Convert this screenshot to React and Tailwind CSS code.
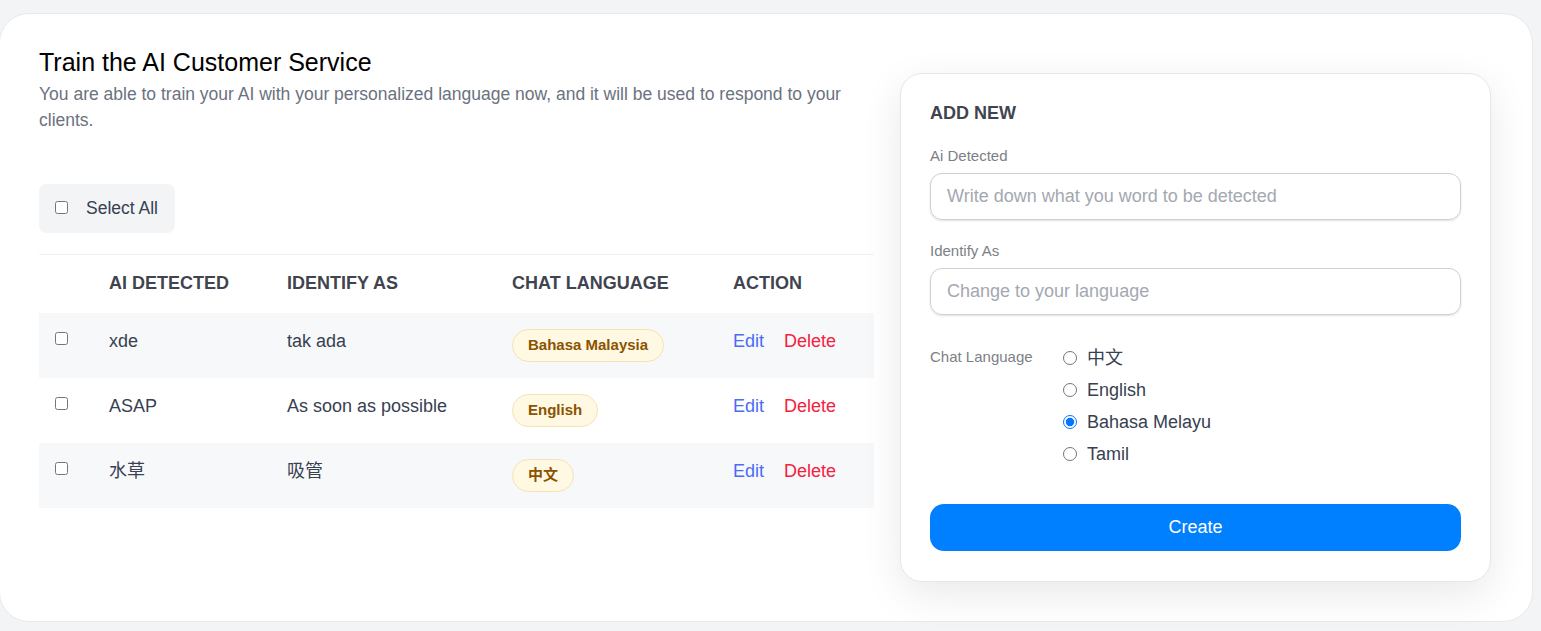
import { useState } from "react";

const rows = [
  { id: 1, detected: "xde", identify: "tak ada", lang: "Bahasa Malaysia" },
  { id: 2, detected: "ASAP", identify: "As soon as possible", lang: "English" },
  { id: 3, detected: "水草", identify: "吸管", lang: "中文" },
];

const langs = ["中文", "English", "Bahasa Melayu", "Tamil"];

const font = {
  fontFamily:
    '"Liberation Sans", Arial, "Noto Sans CJK SC", sans-serif',
};

export default function App() {
  const [chatLang, setChatLang] = useState("Bahasa Melayu");

  return (
    <div className="min-h-[631px] bg-[#f3f4f6] pt-[13px] pb-[9px]" style={font}>
      <div className="-ml-px w-[1534px] h-[609px] bg-white border border-[#e8e9ec] rounded-[30px] flex gap-[26px] pl-[39px] pr-[41px] pt-[32px]">
        {/* left side */}
        <div className="flex-1">
          <h1 className="text-[25px] leading-8 text-black">Train the AI Customer Service</h1>
          <p className="mt-[3px] text-[17.5px] leading-[26px] text-[#6b7280]">
            You are able to train your AI with your personalized language now, and it will be used to respond to your
            clients.
          </p>

          <label className="mt-[51px] inline-flex items-center h-[49px] w-[136px] bg-[#f3f4f6] rounded-lg pl-[16px] gap-[18px] text-[17.5px] text-[#374151]">
            <input type="checkbox" className="w-[13px] h-[13px] -mt-[3px]" />
            Select All
          </label>

          <table className="mt-[21px] w-full table-fixed border-t border-[#f0f1f3] text-[18px]">
            <colgroup>
              <col className="w-[54px]" />
              <col className="w-[178px]" />
              <col className="w-[225px]" />
              <col className="w-[221px]" />
              <col />
            </colgroup>
            <thead>
              <tr className="h-[58px] text-left text-[#3f4450] uppercase">
                <th></th>
                <th className="px-4 font-bold">AI Detected</th>
                <th className="px-4 font-bold">Identify As</th>
                <th className="px-4 font-bold">Chat Language</th>
                <th className="px-4 font-bold">Action</th>
              </tr>
            </thead>
            <tbody>
              {rows.map((r, i) => (
                <tr key={r.id} className={i % 2 === 0 ? "bg-[#f7f8fa]" : "bg-white"}>
                  <td className="px-4 py-4 align-top">
                    <input type="checkbox" className="block w-[13px] h-[13px] mt-[3px]" />
                  </td>
                  <td className="px-4 py-4 align-top leading-6 text-[#374151]">{r.detected}</td>
                  <td className="px-4 py-4 align-top leading-6 text-[#374151]">{r.identify}</td>
                  <td className="px-4 py-4 align-top">
                    <span className="inline-flex items-center h-[33px] px-[15px] rounded-full border border-[#f3e3b5] bg-[#fff8e3] text-[15px] font-bold text-[#8a5300]">
                      {r.lang}
                    </span>
                  </td>
                  <td className="px-4 py-4 align-top leading-6">
                    <button className="text-[#4a6cf7] mr-[20px]">Edit</button>
                    <button className="text-[#f5203e]">Delete</button>
                  </td>
                </tr>
              ))}
            </tbody>
          </table>
        </div>

        {/* right card */}
        <div className="w-[591px] h-[509px] mt-[27px] bg-white border border-[#e6e7ea] rounded-[22px] shadow-[0_12px_40px_rgba(0,0,0,0.09)] px-[29px] pt-[27px]">
          <h2 className="text-[18px] leading-6 font-bold text-[#3f4450] uppercase">Add New</h2>

          <div className="mt-[21px] text-[15px] leading-5 text-[#7c7f86]">Ai Detected</div>
          <input
            placeholder="Write down what you word to be detected"
            className="mt-[7px] w-full h-[47px] rounded-xl border border-[#ccd0d7] shadow-[0_1px_2px_rgba(0,0,0,0.12)] px-4 text-[18px] text-[#374151] placeholder:text-[#a3a8b1] outline-none"
          />

          <div className="mt-[21px] text-[15px] leading-5 text-[#7c7f86]">Identify As</div>
          <input
            placeholder="Change to your language"
            className="mt-[7px] w-full h-[47px] rounded-xl border border-[#ccd0d7] shadow-[0_1px_2px_rgba(0,0,0,0.12)] px-4 text-[18px] text-[#374151] placeholder:text-[#a3a8b1] outline-none"
          />

          <div className="mt-[27px] flex">
            <div className="w-[133px] text-[15px] leading-5 text-[#7c7f86] pt-[5px]">Chat Language</div>
            <div className="flex flex-col">
              {langs.map((l) => (
                <label key={l} className="flex items-center gap-[10px] h-[32px] text-[18px] text-[#374151]">
                  <input
                    type="radio"
                    name="chatlang"
                    checked={chatLang === l}
                    onChange={() => setChatLang(l)}
                    className="w-[14px] h-[14px] m-0 accent-[#0075ff]"
                  />
                  {l}
                </label>
              ))}
            </div>
          </div>

          <button className="mt-[34px] w-full h-[47px] rounded-[14px] bg-[#0080ff] text-white text-[18px]">
            Create
          </button>
        </div>
      </div>
    </div>
  );
}
